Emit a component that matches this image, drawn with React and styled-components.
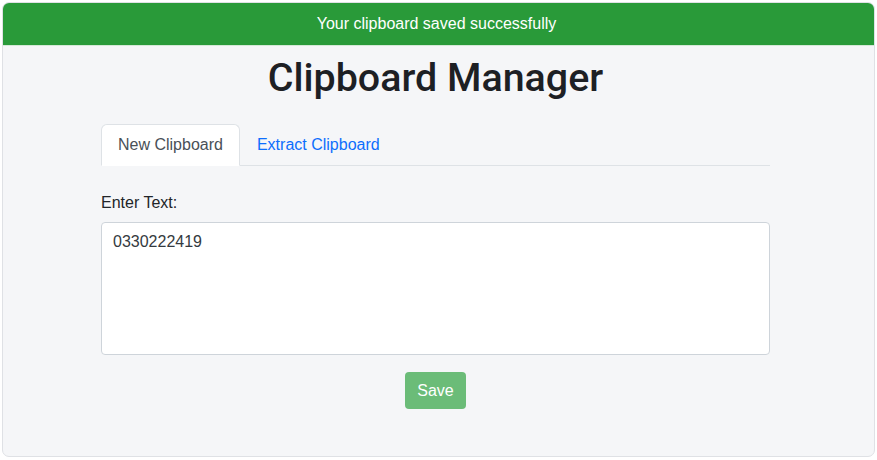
import React from "react";
import styled, { createGlobalStyle } from "styled-components";

const Global = createGlobalStyle`
  html, body { margin: 0; padding: 0; background: #ffffff; }
  body { font-family: "Liberation Sans", Arial, sans-serif; color: #212529; }
  * { box-sizing: border-box; }
`;

const Card = styled.div`
  margin: 2px;
  width: 873px;
  height: 455px;
  border: 1px solid #dfe1e5;
  border-radius: 7px;
  background: #f5f6f8;
  overflow: hidden;
`;

const Banner = styled.div`
  height: 43px;
  background: #299a39;
  color: #ffffff;
  font-size: 16px;
  display: flex;
  align-items: center;
  justify-content: center;
  padding-right: 4px;
  border-bottom: 1px solid #d4e9d7;
`;

const Title = styled.h1`
  margin: 10px 0 0;
  padding-right: 6px;
  text-align: center;
  font-family: Roboto, "Liberation Sans", Arial, sans-serif;
  font-size: 39.4px;
  font-weight: 500;
  line-height: 44px;
  color: #1d2024;
`;

const Content = styled.div`
  width: 669px;
  margin: 24px 0 0 98px;
`;

const Tabs = styled.div`
  display: flex;
  border-bottom: 1px solid #dee2e6;
  height: 42px;
`;

const Tab = styled.div`
  height: 42px;
  padding: 0 16px;
  display: flex;
  align-items: center;
  font-size: 16px;
  margin-bottom: -1px;
  border: 1px solid ${(p) => (p.$active ? "#dee2e6" : "transparent")};
  border-bottom-color: ${(p) => (p.$active ? "#ffffff" : "transparent")};
  border-radius: 6px 6px 0 0;
  background: ${(p) => (p.$active ? "#ffffff" : "transparent")};
  color: ${(p) => (p.$active ? "#495057" : "#0d6efd")};
`;

const Label = styled.label`
  display: block;
  margin-top: 27px;
  font-size: 16px;
  line-height: 20px;
  color: #212529;
`;

const TextArea = styled.textarea`
  display: block;
  margin-top: 9px;
  width: 669px;
  height: 133px;
  padding: 9px 11px;
  border: 1px solid #ced4da;
  border-radius: 4px;
  background: #ffffff;
  font-family: "Liberation Sans", Arial, sans-serif;
  font-size: 16px;
  line-height: 20px;
  color: #343a40;
  resize: none;
  outline: none;
`;

const Actions = styled.div`
  display: flex;
  justify-content: center;
  margin-top: 17px;
`;

const SaveButton = styled.button`
  width: 61px;
  height: 37px;
  border: none;
  border-radius: 4px;
  background: #6bbc78;
  color: #ffffff;
  font-family: "Liberation Sans", Arial, sans-serif;
  font-size: 16px;
  padding: 0;
`;

export default function App() {
  return (
    <>
      <Global />
      <Card>
        <Banner>Your clipboard saved successfully</Banner>
        <Title>Clipboard Manager</Title>
        <Content>
          <Tabs>
            <Tab $active>New Clipboard</Tab>
            <Tab>Extract Clipboard</Tab>
          </Tabs>
          <Label>Enter Text:</Label>
          <TextArea defaultValue="0330222419" />
          <Actions>
            <SaveButton>Save</SaveButton>
          </Actions>
        </Content>
      </Card>
    </>
  );
}
